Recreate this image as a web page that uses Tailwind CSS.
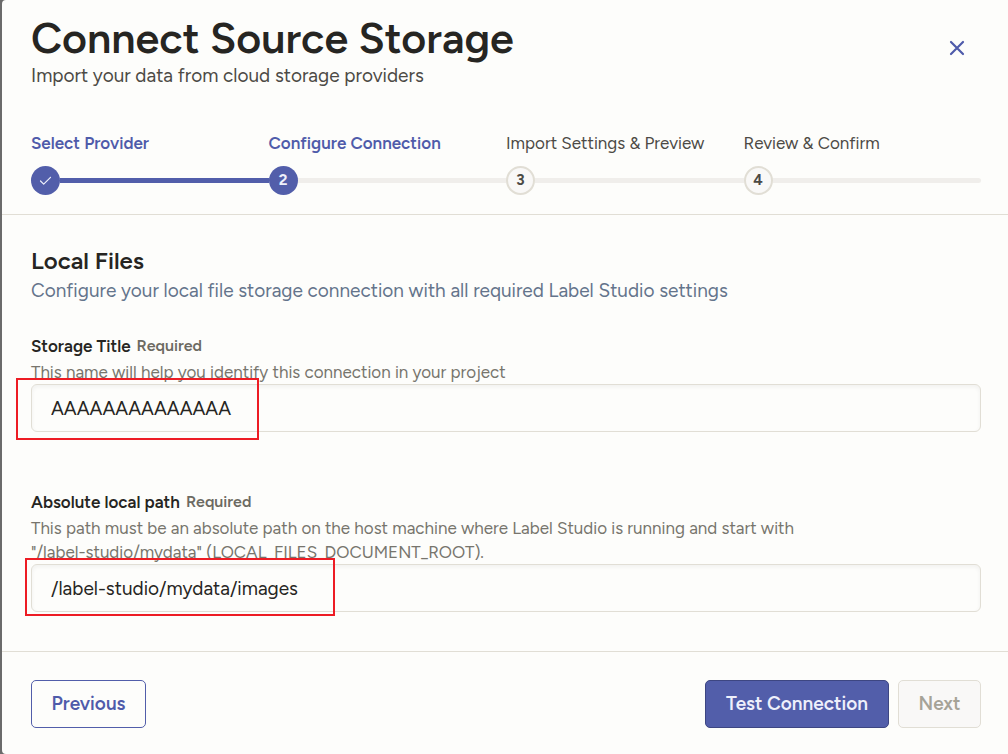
<!DOCTYPE html>
<html lang="en">
<head>
    <meta charset="UTF-8">
    <meta name="viewport" content="width=device-width, initial-scale=1.0">
    <title>Connect Source Storage</title>
    <script src="https://cdn.jsdelivr.net/npm/@tailwindcss/browser@4"></script>
</head>
<body class="bg-[#6b6b6b] font-['Figtree','Lato',sans-serif] pl-[2px] text-[#262522]">
    <div class="bg-[#fdfdfb] rounded-l-[4px] min-h-screen flex flex-col">
        <header class="pt-[14px] pl-[29px] pr-[27px] pb-[19px] border-b border-[#e1ded5]">
            <div class="flex justify-between">
                <div>
                    <h1 class="text-[43px] leading-[48px] font-semibold">Connect Source Storage</h1>
                    <p class="text-[19px] leading-[28px] text-[#4c4a45]">Import your data from cloud storage providers</p>
                </div>
                <button type="button" aria-label="Close" class="w-[48px] h-[48px] mt-[10px] flex items-center justify-center text-[#4f5baa]">
                    <svg width="16" height="16" viewBox="0 0 16 16" fill="none" stroke="currentColor" stroke-width="2.2" stroke-linecap="round"><path d="M2 2l12 12M14 2L2 14"/></svg>
                </button>
            </div>

            <!-- Stepper -->
            <div class="mt-[41px]">
                <div class="grid grid-cols-4 text-[17px] leading-[24px] text-[#4c4a45]">
                    <span class="font-semibold text-[#4f5baa]">Select Provider</span>
                    <span class="font-semibold text-[#4f5baa]">Configure Connection</span>
                    <span>Import Settings &amp; Preview</span>
                    <span>Review &amp; Confirm</span>
                </div>
                <ol class="grid grid-cols-4 mt-[11px] text-[15px] font-bold text-[#4c4a45]">
                    <li class="flex items-center">
                        <span class="w-[29px] h-[29px] rounded-full bg-[#525eaa] flex items-center justify-center">
                            <svg width="13" height="13" viewBox="0 0 13 13" fill="none" stroke="#eef0fb" stroke-width="1.2" stroke-linecap="round" stroke-linejoin="round"><path d="M1.5 7l3.2 3.2L11.5 3.3"/></svg>
                        </span>
                        <span class="flex-1 h-[5px] bg-[#525eaa]"></span>
                    </li>
                    <li class="flex items-center">
                        <span class="w-[29px] h-[29px] rounded-full bg-[#525eaa] text-[#eef0fb] flex items-center justify-center">2</span>
                        <span class="flex-1 h-[5px] bg-[#f0eeeb]"></span>
                    </li>
                    <li class="flex items-center">
                        <span class="w-[29px] h-[29px] rounded-full bg-[#f9f8f7] border-2 border-[#e1ded5] flex items-center justify-center">3</span>
                        <span class="flex-1 h-[5px] bg-[#f0eeeb]"></span>
                    </li>
                    <li class="flex items-center">
                        <span class="w-[29px] h-[29px] rounded-full bg-[#f9f8f7] border-2 border-[#e1ded5] flex items-center justify-center">4</span>
                        <span class="flex-1 h-[5px] bg-[#f0eeeb] rounded-r-full"></span>
                    </li>
                </ol>
            </div>
        </header>

        <form class="flex-1 flex flex-col">
            <div class="flex-1 pt-[30px] pl-[29px] pr-[27px] pb-[39px]">
                <h2 class="text-[24px] leading-[32px] font-semibold">Local Files</h2>
                <p class="text-[19px] leading-[28px] text-[#64748b]">Configure your local file storage connection with all required Label Studio settings</p>

                <div class="mt-[29px]">
                    <label for="title" class="flex gap-[6px] text-[17px] leading-[24px] font-semibold">Storage Title <span class="text-[16px] text-[#6c6a62]">Required</span></label>
                    <p class="mt-[2px] text-[17px] leading-[24px] text-[#77756d]">This name will help you identify this connection in your project</p>
                    <div class="relative">
                        <input type="text" id="title" value="AAAAAAAAAAAAAA" class="block w-full h-[48px] px-[19px] text-[19px] bg-transparent border border-[#e1ded5] rounded-[6px] inset-shadow-sm outline-none">
                        <div class="absolute left-[-15px] top-[-6px] w-[243px] h-[62px] border-2 border-[#ed1c24] pointer-events-none"></div>
                    </div>
                </div>

                <div class="mt-[58px]">
                    <label for="path" class="flex gap-[6px] text-[17px] leading-[24px] font-semibold">Absolute local path <span class="text-[16px] text-[#6c6a62]">Required</span></label>
                    <p class="mt-[2px] text-[17px] leading-[24px] text-[#77756d]">This path must be an absolute path on the host machine where Label Studio is running and start with<br>"/label-studio/mydata" (LOCAL_FILES_DOCUMENT_ROOT).</p>
                    <div class="relative">
                        <input type="text" id="path" value="/label-studio/mydata/images" class="block w-full h-[48px] px-[19px] text-[19px] bg-transparent border border-[#e1ded5] rounded-[6px] inset-shadow-sm outline-none">
                        <div class="absolute left-[-6px] top-[-6px] w-[310px] h-[58px] border-2 border-[#ed1c24] pointer-events-none"></div>
                    </div>
                </div>
            </div>

            <div class="flex gap-[9px] pt-[28px] pl-[29px] pr-[27px] pb-[26px] border-t border-[#e1ded5] text-[19px] font-semibold">
                <button type="button" class="h-[48px] min-w-[115px] px-[18px] mr-auto rounded-[5px] border border-[#525eaa] text-[#4f5baa]">Previous</button>
                <button type="submit" class="h-[48px] min-w-[184px] px-[18px] rounded-[5px] border border-[#3d4682] bg-[#525eaa] text-[#eef0fb]">Test Connection</button>
                <button type="button" disabled class="h-[48px] min-w-[83px] px-[18px] rounded-[5px] border border-[#e1ded5] bg-[#f9f8f7] text-[#a6a397]">Next</button>
            </div>
        </form>
    </div>
</body>
</html>
